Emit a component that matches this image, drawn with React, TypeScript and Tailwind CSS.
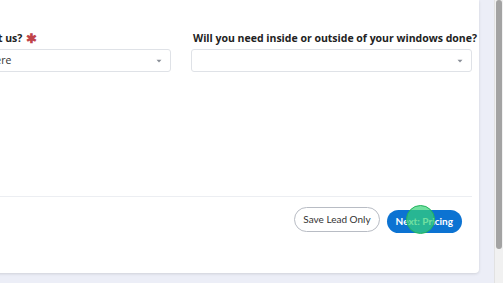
import React from "react";

function Caret() {
  return (
    <svg width="6" height="4" viewBox="0 0 6 4" className="shrink-0">
      <path d="M0.5 0.8 L5.5 0.8 L3 3.4 Z" fill="#8a8f98" />
    </svg>
  );
}

function Field({ label, required, value }: { label: string; required?: boolean; value?: string }) {
  return (
    <div className="flex flex-col">
      <div className="flex items-center h-[16px] pl-[2px] text-[10.5px] font-bold text-[#222] leading-none [font-family:'Open_Sans',sans-serif] whitespace-nowrap">
        <span>{label}</span>
        {required && <span className="ml-[4px] text-[#c0444a] text-[13px]">✱</span>}
      </div>
      <div className="mt-[3px] h-[23px] border border-[#dfe2e7] rounded-[3px] bg-white flex items-center pl-[8px] pr-[8px] justify-between">
        <span className="text-[10.5px] text-[#333] [font-family:'Open_Sans',sans-serif] whitespace-nowrap">{value}</span>
        <Caret />
      </div>
    </div>
  );
}

export default function App() {
  return (
    <div className="w-[503px] h-[283px] overflow-hidden bg-[#eceef7] flex">
      <div className="flex-1 overflow-hidden">
        <div className="ml-[-132px] mr-[15px] h-[273px] bg-white rounded-b-[4px] shadow-[0_1px_3px_rgba(0,0,0,0.12)] flex flex-col px-[7px]">
          <div className="pt-[30px] grid grid-cols-[296px_281px] gap-x-[20px]">
            <Field label="How did you hear about us?" required value="Saw our signs somewhere" />
            <Field label="Will you need inside or outside of your windows done?" />
          </div>
          <div className="flex-1" />
          <div className="border-t border-[#eceef2] mb-[40px] pt-[10px] pr-[10px] flex justify-end gap-[7px] [font-family:'Lato',sans-serif]">
            <button className="h-[25px] px-[8px] rounded-full border border-[#b8bcc4] bg-white text-[10px] text-[#333]">
              Save Lead Only
            </button>
            <div className="relative">
              <button className="h-[23px] mt-[1px] px-[9px] rounded-full bg-[#0c73d2] text-[10px] font-bold text-white">
                Next: Pricing
              </button>
              <div className="absolute left-[19px] top-[-2px] w-[29px] h-[29px] rounded-full bg-[rgba(52,211,120,0.7)] border-[1.5px] border-[#22b35e]" />
            </div>
          </div>
        </div>
      </div>
      <div className="w-[9px] h-full bg-[#f1f1f1] border-l border-[#e2e2e2] flex justify-center">
        <div className="mt-[0px] w-[6px] h-[249px] rounded-[3px] bg-[#a3a3a3]" />
      </div>
    </div>
  );
}
